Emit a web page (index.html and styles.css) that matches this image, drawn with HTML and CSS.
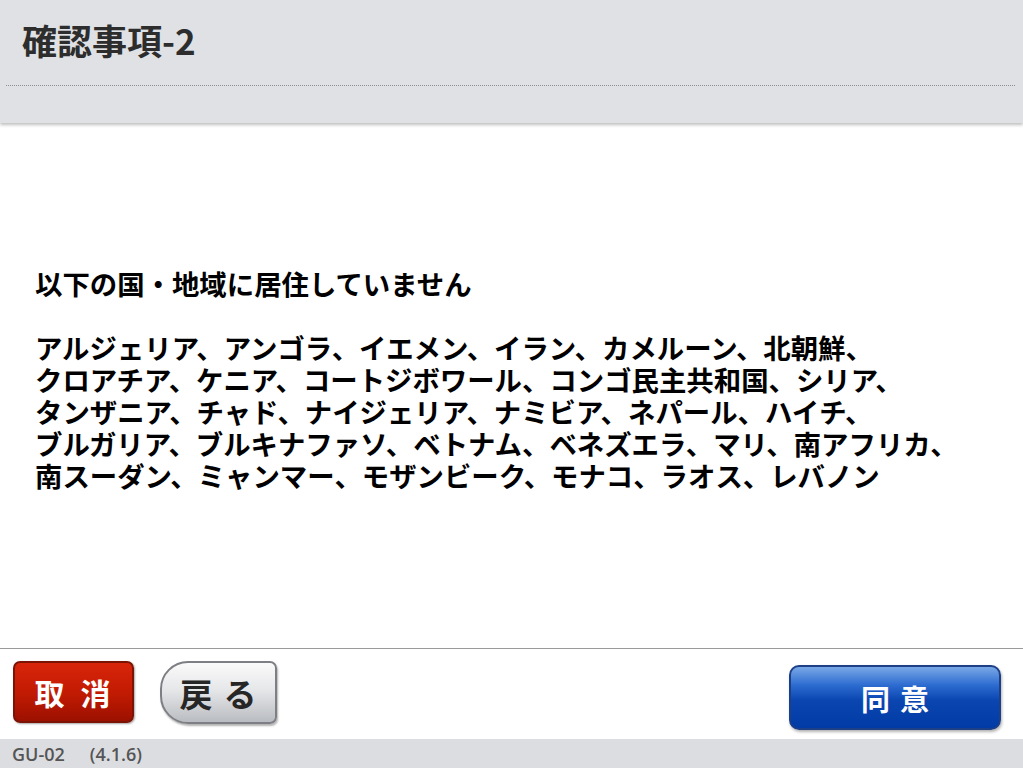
FILE: index.html
```html
<!DOCTYPE html>
<html lang="ja">
<head>
    <meta charset="UTF-8">
    <title>確認事項-2</title>
    <link rel="stylesheet" href="styles.css">
</head>
<body>

    <!-- Header -->
    <div class="header">
        <h1 class="title">確認事項-2</h1>
        <div class="dots"></div>
    </div>

    <!-- Message -->
    <div class="content">
        <div class="message">
            <p class="lead">以下の国・地域に居住していません</p>
            <p class="countries">
                アルジェリア、アンゴラ、イエメン、イラン、カメルーン、北朝鮮、<br>
                クロアチア、ケニア、コートジボワール、コンゴ民主共和国、シリア、<br>
                タンザニア、チャド、ナイジェリア、ナミビア、ネパール、ハイチ、<br>
                ブルガリア、ブルキナファソ、ベトナム、ベネズエラ、マリ、南アフリカ、<br>
                南スーダン、ミャンマー、モザンビーク、モナコ、ラオス、レバノン
            </p>
        </div>
    </div>

    <!-- Buttons -->
    <div class="toolbar">
        <div class="left-buttons">
            <button class="btn btn-cancel">取消</button>
            <button class="btn btn-back">戻る</button>
        </div>
        <button class="btn btn-agree">同意</button>
    </div>

    <!-- Footer -->
    <div class="footer">
        <span>GU-02</span>
        <span>(4.1.6)</span>
    </div>

</body>
</html>
```

FILE: styles.css
```css
html, body {
    margin: 0;
    padding: 0;
}
body {
    font-family: "Noto Sans CJK JP", "Noto Sans", sans-serif;
    background-color: #fff;
    width: 1023px;
    height: 768px;
    display: flex;
    flex-direction: column;
    overflow: hidden;
}
.header {
    height: 123px;
    flex-shrink: 0;
    background-color: #dfe1e5;
    box-shadow: 0 2px 3px rgba(0,0,0,0.25);
    position: relative;
    z-index: 1;
    padding: 0 8px 0 6px;
}
.title {
    margin: 0;
    padding: 18px 0 0 16px;
    height: 67px;
    box-sizing: border-box;
    font-size: 35px;
    line-height: 44px;
    font-weight: bold;
    color: #2d2d2d;
}
.dots {
    border-top: 1px dotted #8e8e8e;
    margin-top: 18px;
}
.content {
    flex: 1;
    display: flex;
    align-items: center;
    padding-left: 35px;
    padding-bottom: 14px;
}
.message p {
    margin: 0;
    font-size: 27.4px;
    line-height: 32px;
    font-weight: bold;
    color: #000;
    white-space: nowrap;
}
.message .lead {
    margin-bottom: 32px;
}
.toolbar {
    height: 90px;
    flex-shrink: 0;
    border-top: 1px solid #9a9a9a;
    display: flex;
    justify-content: space-between;
    align-items: flex-start;
    padding: 0 22px 0 13px;
}
.left-buttons {
    display: flex;
    gap: 26px;
}
.btn {
    font-family: "Noto Sans CJK JP", sans-serif;
    font-weight: bold;
    cursor: pointer;
    padding: 0;
}
.btn-cancel {
    margin-top: 12px;
    width: 121px;
    height: 62px;
    font-size: 30px;
    letter-spacing: 16px;
    text-indent: 14px;
    color: #fff;
    border: 2px solid #7c1405;
    border-radius: 7px;
    background: linear-gradient(#d8250a, #c01a02 55%, #9c1000);
    box-shadow: 1px 1px 2px rgba(0,0,0,0.35);
}
.btn-back {
    margin-top: 12px;
    width: 117px;
    height: 63px;
    font-size: 33px;
    letter-spacing: 11px;
    text-indent: 10px;
    color: #262626;
    border: 2px solid #7d7f84;
    border-radius: 28px 7px 7px 28px;
    background: linear-gradient(#fafafa, #e6e7e9 45%, #b9bcc1);
    box-shadow: 1px 2px 2px rgba(0,0,0,0.3);
}
.btn-agree {
    margin-top: 16px;
    width: 212px;
    height: 65px;
    font-size: 29px;
    letter-spacing: 10px;
    text-indent: 10px;
    color: #fff;
    border: 2px solid #1d3f86;
    border-radius: 10px;
    background: linear-gradient(#79a8e6, #2c6bd0 30%, #0a45b0 55%, #003ba6);
    box-shadow: 1px 2px 3px rgba(0,0,0,0.3);
}
.footer {
    height: 29px;
    flex-shrink: 0;
    background-color: #dcdde1;
    display: flex;
    align-items: center;
    gap: 25px;
    padding-left: 12px;
    font-family: "Open Sans", "Noto Sans", sans-serif;
    font-size: 18px;
    font-weight: 600;
    color: #555;
}
```
